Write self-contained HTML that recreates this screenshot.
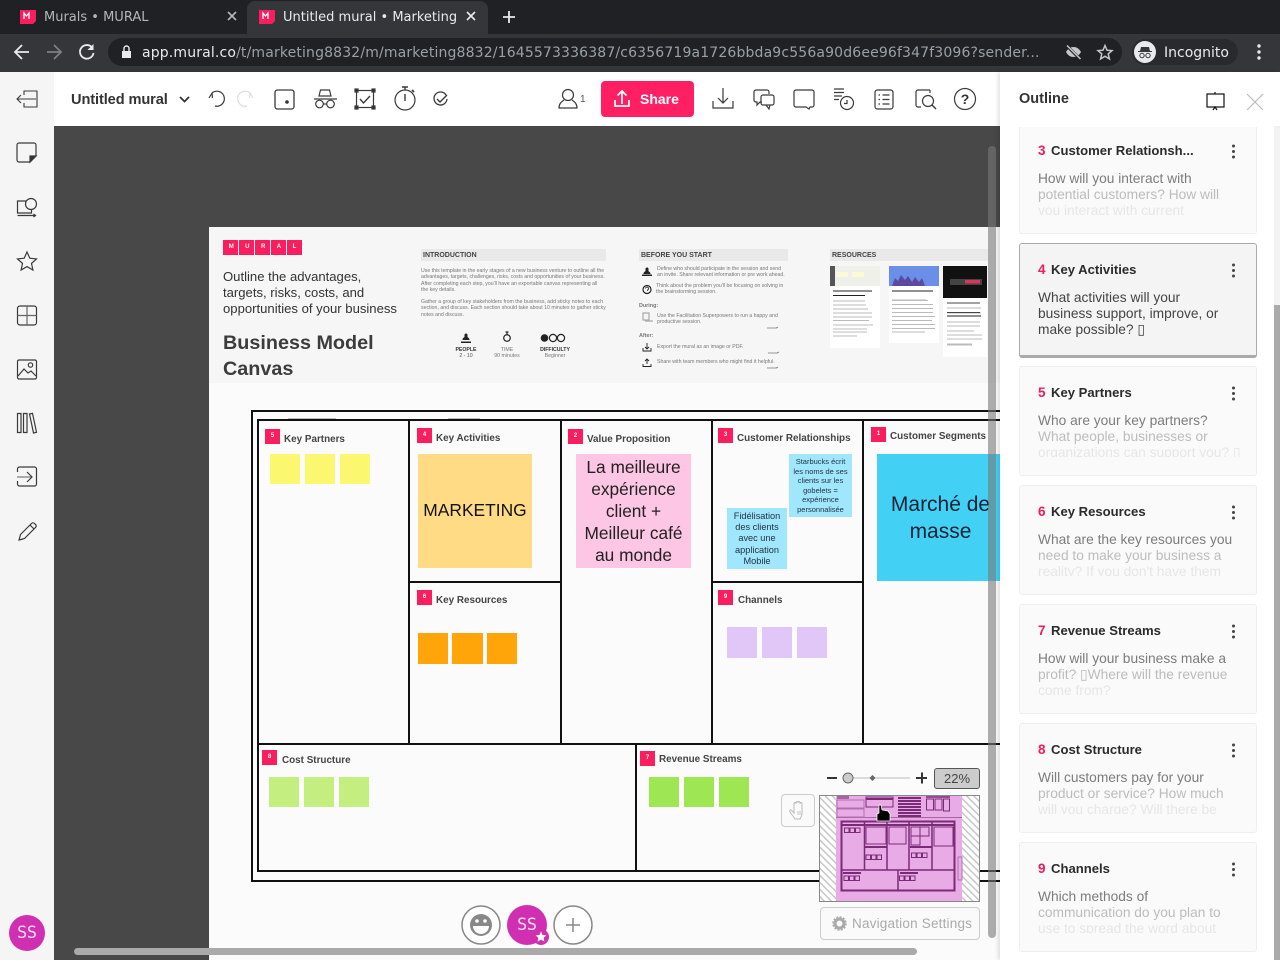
<!DOCTYPE html>
<html><head><meta charset="utf-8"><title>Untitled mural • Marketing</title>
<style>
html,body{margin:0;padding:0;width:1280px;height:960px;overflow:hidden;background:#484848;font-family:"Liberation Sans",sans-serif}
div{box-sizing:border-box}
.a{position:absolute}
.t{position:absolute;white-space:nowrap;line-height:20px;height:20px}
.c{font-family:"DejaVu Sans",sans-serif}
.s{position:absolute}
.tile{position:absolute;width:15px;height:15px;background:#fb1e5f;color:#fff;font-size:6px;font-weight:bold;text-align:center;line-height:14px}
.lb{position:absolute;white-space:nowrap;font-size:9.9px;font-weight:bold;color:#444;line-height:12px;margin-top:2px}
.b{position:absolute;background:#111}
.card{position:absolute;left:1019px;width:238px;background:#fafafa;border:1px solid #eee;border-radius:3px}
.n{position:absolute;left:1038px;font-size:13.5px;font-weight:bold;color:#f4185c;line-height:20px;white-space:nowrap}
.h{position:absolute;font-size:13.1px;font-weight:bold;color:#2b2b2b;line-height:20px;white-space:nowrap}
.l{position:absolute;left:1038px;font-size:13.75px;line-height:16px;white-space:nowrap;color:#7c7c7c}
.l2{color:#bcbcbc}.l3{color:#e6e6e6}
.m{position:absolute;font-size:5.2px;line-height:6.3px;color:#777;white-space:nowrap}
.hd{position:absolute;height:12px;background:#e9e9e9;font-size:7px;font-weight:bold;color:#444;line-height:13px;padding-left:2px}
</style></head><body>

<!-- browser chrome -->
<div class="a" style="left:0;top:0;width:1280px;height:34px;background:#202124"></div>
<div class="a" style="left:0;top:34px;width:1280px;height:38px;background:#35363a"></div>
<div class="a" style="left:247px;top:1px;width:241px;height:33px;background:#35363a;border-radius:8px 8px 0 0"></div>
<div class="a" style="left:108px;top:38px;width:1014px;height:28px;background:#202124;border-radius:14px"></div>
<div class="a" style="left:1132px;top:39px;width:106px;height:26px;background:#292a2d;border-radius:13px"></div>
<div class="t c" style="left:44px;top:8px;font-size:13px;color:#b4b6b9">Murals • MURAL</div>
<div class="t c" style="left:283px;top:8px;font-size:13px;color:#e8eaed">Untitled mural • Marketing</div>
<div class="t c" style="left:142px;top:43px;font-size:14px;color:#e8eaed;letter-spacing:.15px">app.mural.co<span style="color:#9aa0a6">/t/marketing8832/m/marketing8832/1645573336387/c6356719a1726bbda9c556a90d6ee96f347f3096?sender...</span></div>
<div class="t c" style="left:1164px;top:43px;font-size:14px;color:#e8eaed">Incognito</div>

<!-- canvas -->
<div class="a" style="left:54px;top:126px;width:946px;height:834px;background:#484848;overflow:hidden">
  <div class="a" style="left:155px;top:101px;width:800px;height:740px;background:#fbfbfb"></div>
  <div class="a" style="left:155px;top:101px;width:800px;height:156px;background:#f6f6f6"></div>
</div>

<!-- mural header -->
<div class="a" style="left:223px;top:240px;width:79px;height:15px;background:#fb1e5f"></div>
<div class="a" style="left:238px;top:240px;width:1px;height:15px;background:#f6f6f6"></div>
<div class="a" style="left:254px;top:240px;width:1px;height:15px;background:#f6f6f6"></div>
<div class="a" style="left:270px;top:240px;width:1px;height:15px;background:#f6f6f6"></div>
<div class="a" style="left:286px;top:240px;width:1px;height:15px;background:#f6f6f6"></div>
<div class="a" style="left:223px;top:240px;width:79px;height:15px;color:#fff;font-size:6px;font-weight:bold;line-height:15px;display:flex;justify-content:space-around;text-align:center"><span>M</span><span>U</span><span>R</span><span>A</span><span>L</span></div>
<div class="t" style="left:223px;top:267px;font-size:13.1px;color:#333">Outline the advantages,</div>
<div class="t" style="left:223px;top:283px;font-size:13.1px;color:#333">targets, risks, costs, and</div>
<div class="t" style="left:223px;top:299px;font-size:13.1px;color:#333">opportunities of your business</div>
<div class="t" style="left:223px;top:332px;font-size:19.8px;font-weight:bold;color:#3c3c3c;line-height:22px">Business Model</div>
<div class="t" style="left:223px;top:358px;font-size:19.8px;font-weight:bold;color:#3c3c3c;line-height:22px">Canvas</div>

<div class="hd" style="left:421px;top:249px;width:185px">INTRODUCTION</div>
<div class="m" style="left:421px;top:268px">Use this template in the early stages of a new business venture to outline all the<br>advantages, targets, challenges, risks, costs and opportunities of your business.<br>After completing each step, you'll have an exportable canvas representing all<br>the key details.</div>
<div class="m" style="left:421px;top:299px">Gather a group of key stakeholders from the business, add sticky notes to each<br>section, and discuss. Each section should take about 10 minutes to gather sticky<br>notes and discuss.</div>
<div class="m" style="left:445px;top:347px;width:42px;text-align:center;color:#555"><b style="color:#333">PEOPLE</b><br>2 - 10</div>
<div class="m" style="left:487px;top:347px;width:40px;text-align:center">TIME<br>90 minutes</div>
<div class="m" style="left:530px;top:347px;width:50px;text-align:center"><b style="color:#333">DIFFICULTY</b><br>Beginner</div>

<div class="hd" style="left:639px;top:249px;width:149px">BEFORE YOU START</div>
<div class="m" style="left:657px;top:266px">Define who should participate in the session and send<br>an invite. Share relevant information or pre work ahead.</div>
<div class="m" style="left:656px;top:283px">Think about the problem you'll be focusing on solving in<br>the brainstorming session.</div>
<div class="m" style="left:639px;top:303px;font-weight:bold;font-size:5.4px">During:</div>
<div class="m" style="left:657px;top:313px">Use the Facilitation Superpowers to run a happy and<br>productive session.</div>
<div class="m" style="left:639px;top:333px;font-weight:bold;font-size:5.4px">After:</div>
<div class="m" style="left:657px;top:344px">Export the mural as an image or PDF.</div>
<div class="m" style="left:657px;top:359px">Share with team members who might find it helpful.</div>

<div class="hd" style="left:830px;top:249px;width:158px">RESOURCES</div>

<!-- stickies -->
<div class="s" style="left:270px;top:454px;width:30px;height:30px;background:#fbf870"></div>
<div class="s" style="left:305px;top:454px;width:30px;height:30px;background:#fbf870"></div>
<div class="s" style="left:340px;top:454px;width:30px;height:30px;background:#fbf870"></div>
<div class="s" style="left:418px;top:454px;width:114px;height:114px;background:#ffdb85;font-size:17.4px;color:#111;text-align:center;line-height:112px">MARKETING</div>
<div class="s" style="left:576px;top:454px;width:115px;height:114px;background:#fcc6e4;font-size:17.3px;color:#222;text-align:center;line-height:22px;padding-top:2px">La meilleure<br>expérience<br>client +<br>Meilleur café<br>au monde</div>
<div class="s" style="left:789px;top:454px;width:63px;height:63px;background:#a0e6fd;font-size:7.5px;color:#234;text-align:center;line-height:9.5px;padding-top:3px">Starbucks écrit<br>les noms de ses<br>clients sur les<br>gobelets =<br>expérience<br>personnalisée</div>
<div class="s" style="left:727px;top:508px;width:60px;height:61px;background:#a0e6fd;font-size:9.2px;color:#234;text-align:center;line-height:11.2px;padding-top:3px">Fidélisation<br>des clients<br>avec une<br>application<br>Mobile</div>
<div class="s" style="left:877px;top:454px;width:127px;height:127px;background:#42d1f5;font-size:21px;color:#123;line-height:27px;padding-top:37px;text-align:center">Marché de<br>masse</div>
<div class="s" style="left:418px;top:633px;width:30px;height:31px;background:#ffa50a"></div>
<div class="s" style="left:452px;top:633px;width:31px;height:31px;background:#ffa50a"></div>
<div class="s" style="left:487px;top:633px;width:30px;height:31px;background:#ffa50a"></div>
<div class="s" style="left:727px;top:627px;width:30px;height:31px;background:#e1c6f8"></div>
<div class="s" style="left:762px;top:627px;width:30px;height:31px;background:#e1c6f8"></div>
<div class="s" style="left:797px;top:627px;width:30px;height:31px;background:#e1c6f8"></div>
<div class="s" style="left:269px;top:777px;width:30px;height:30px;background:#c4ee80"></div>
<div class="s" style="left:304px;top:777px;width:30px;height:30px;background:#c4ee80"></div>
<div class="s" style="left:339px;top:777px;width:30px;height:30px;background:#c4ee80"></div>
<div class="s" style="left:649px;top:777px;width:30px;height:30px;background:#9fe653"></div>
<div class="s" style="left:684px;top:777px;width:30px;height:30px;background:#9fe653"></div>
<div class="s" style="left:719px;top:777px;width:30px;height:30px;background:#9fe653"></div>

<!-- board lines -->
<div class="b" style="left:251px;top:410px;width:749px;height:2px"></div>
<div class="b" style="left:251px;top:410px;width:2px;height:472px"></div>
<div class="b" style="left:251px;top:880px;width:749px;height:2px"></div>
<div class="b" style="left:257px;top:419px;width:743px;height:2px"></div>
<div class="b" style="left:257px;top:419px;width:2px;height:453px"></div>
<div class="b" style="left:257px;top:870px;width:743px;height:2px"></div>
<div class="b" style="left:257px;top:743px;width:743px;height:2px"></div>
<div class="b" style="left:408px;top:419px;width:2px;height:325px"></div>
<div class="b" style="left:560px;top:419px;width:2px;height:325px"></div>
<div class="b" style="left:711px;top:419px;width:2px;height:325px"></div>
<div class="b" style="left:862px;top:419px;width:2px;height:325px"></div>
<div class="b" style="left:635px;top:743px;width:2px;height:128px"></div>
<div class="b" style="left:408px;top:581px;width:153px;height:2px"></div>
<div class="b" style="left:711px;top:581px;width:153px;height:2px"></div>
<div class="a" style="left:288px;top:418px;width:48px;height:1px;background:#bbb"></div>
<div class="a" style="left:448px;top:418px;width:32px;height:1px;background:#bbb"></div>

<!-- labels -->
<div class="tile" style="left:265px;top:429px">5</div><div class="lb" style="left:284px;top:432px">Key Partners</div>
<div class="tile" style="left:417px;top:428px">4</div><div class="lb" style="left:436px;top:431px">Key Activities</div>
<div class="tile" style="left:568px;top:429px">2</div><div class="lb" style="left:587px;top:432px">Value Proposition</div>
<div class="tile" style="left:718px;top:428px">3</div><div class="lb" style="left:737px;top:431px">Customer Relationships</div>
<div class="tile" style="left:871px;top:427px">1</div><div class="lb" style="left:890px;top:429px">Customer Segments</div>
<div class="tile" style="left:417px;top:590px">6</div><div class="lb" style="left:436px;top:593px">Key Resources</div>
<div class="tile" style="left:718px;top:590px">9</div><div class="lb" style="left:738px;top:593px">Channels</div>
<div class="tile" style="left:262px;top:750px">8</div><div class="lb" style="left:282px;top:753px">Cost Structure</div>
<div class="tile" style="left:640px;top:751px">7</div><div class="lb" style="left:659px;top:752px">Revenue Streams</div>

<!-- left sidebar + toolbar -->
<div class="a" style="left:0;top:72px;width:54px;height:888px;background:#f5f5f5"></div>
<div class="a" style="left:54px;top:72px;width:946px;height:54px;background:#fff"></div>
<div class="t" style="left:71px;top:90px;font-size:14.6px;font-weight:bold;color:#333;letter-spacing:-.1px">Untitled mural</div>
<div class="a" style="left:601px;top:81px;width:93px;height:36px;background:#ff1f62;border-radius:4px"></div>
<div class="t" style="left:640px;top:89px;font-size:14px;font-weight:bold;color:#fff">Share</div>
<div class="t" style="left:580px;top:90px;font-size:10px;color:#555">1</div>

<!-- scrollbars -->
<div class="a" style="left:988px;top:146px;width:8px;height:792px;background:rgba(120,120,120,.6);border-radius:4px"></div>
<div class="a" style="left:74px;top:948px;width:843px;height:7px;background:#aaa;border-radius:4px"></div>

<!-- zoom controls -->
<div class="a" style="left:934px;top:768px;width:46px;height:21px;background:#ccc;border:1px solid #555;border-radius:3px;text-align:center;font-size:13px;line-height:20px;color:#444">22%</div>
<div class="a" style="left:781px;top:794px;width:34px;height:33px;background:#fafafa;border:1px solid #ccc;border-radius:4px"></div>
<div class="a" style="left:820px;top:907px;width:160px;height:33px;background:#fafafa;border:1px solid #ccc;border-radius:4px"></div>
<div class="t" style="left:852px;top:914px;font-size:13.5px;color:#aaa;letter-spacing:.2px">Navigation Settings</div>

<!-- right panel -->
<div class="a" style="left:1000px;top:72px;width:280px;height:888px;background:#fff;box-shadow:-2px 0 4px rgba(0,0,0,.12)"></div>
<div class="t" style="left:1019px;top:89px;font-size:14.5px;font-weight:bold;color:#333">Outline</div>
<div class="a" style="left:1274px;top:126px;width:6px;height:834px;background:#f2f2f2"></div>
<div class="a" style="left:1274px;top:305px;width:6px;height:655px;background:#aaa"></div>

<div class="card" style="top:127px;height:107px;border-top:none;border-radius:0 0 3px 3px"></div>
<div class="card" style="top:243px;height:115px;background:#f4f4f4;border:1px solid #aaa;border-bottom:3px solid #aaa"></div>
<div class="card" style="top:366px;height:110px"></div>
<div class="card" style="top:485px;height:110px"></div>
<div class="card" style="top:604px;height:110px"></div>
<div class="card" style="top:723px;height:110px"></div>
<div class="card" style="top:842px;height:110px"></div>

<div class="n" style="top:141px">3</div><div class="h" style="left:1051px;top:141px">Customer Relationsh...</div>
<div class="l" style="top:171px">How will you interact with</div>
<div class="l l2" style="top:187px">potential customers? How will</div>
<div class="l l3" style="top:203px;height:12px;overflow:hidden">you interact with current</div>

<div class="n" style="top:260px">4</div><div class="h" style="left:1051px;top:260px">Key Activities</div>
<div class="l" style="top:290px;color:#444">What activities will your</div>
<div class="l" style="top:306px;color:#444">business support, improve, or</div>
<div class="l" style="top:322px;color:#444">make possible? ▯</div>

<div class="n" style="top:383px">5</div><div class="h" style="left:1051px;top:383px">Key Partners</div>
<div class="l" style="top:413px">Who are your key partners?</div>
<div class="l l2" style="top:429px">What people, businesses or</div>
<div class="l l3" style="top:445px;height:12px;overflow:hidden">organizations can support you? ▯</div>

<div class="n" style="top:502px">6</div><div class="h" style="left:1051px;top:502px">Key Resources</div>
<div class="l" style="top:532px">What are the key resources you</div>
<div class="l l2" style="top:548px">need to make your business a</div>
<div class="l l3" style="top:564px;height:12px;overflow:hidden">reality? If you don't have them</div>

<div class="n" style="top:621px">7</div><div class="h" style="left:1051px;top:621px">Revenue Streams</div>
<div class="l" style="top:651px">How will your business make a</div>
<div class="l l2" style="top:667px">profit? ▯Where will the revenue</div>
<div class="l l3" style="top:683px;height:12px;overflow:hidden">come from?</div>

<div class="n" style="top:740px">8</div><div class="h" style="left:1051px;top:740px">Cost Structure</div>
<div class="l" style="top:770px">Will customers pay for your</div>
<div class="l l2" style="top:786px">product or service? How much</div>
<div class="l l3" style="top:802px;height:12px;overflow:hidden">will you charge? Will there be</div>

<div class="n" style="top:859px">9</div><div class="h" style="left:1051px;top:859px">Channels</div>
<div class="l" style="top:889px">Which methods of</div>
<div class="l l2" style="top:905px">communication do you plan to</div>
<div class="l l3" style="top:921px;height:12px;overflow:hidden">use to spread the word about</div>

<!-- icon overlay -->
<svg class="a" style="left:0;top:0" width="1280" height="960" viewBox="0 0 1280 960" fill="none" xmlns="http://www.w3.org/2000/svg">
<defs>
<pattern id="ht" width="5" height="5" patternUnits="userSpaceOnUse" patternTransform="rotate(-45)"><rect width="5" height="5" fill="#fff"/><rect width="1.400" height="5" fill="#c4c4c4"/></pattern>
</defs>

<!-- favicons -->
<path d="M20 10h16v11l-3 3H20z" fill="#fb1e5f"/><path d="M24 19v-6l2.500 3 2.500-3v6" stroke="#fff" stroke-width="1.300"/>
<path d="M259 10h16v11l-3 3h-13z" fill="#fb1e5f"/><path d="M263 19v-6l2.500 3 2.500-3v6" stroke="#fff" stroke-width="1.300"/>
<!-- tab close / new -->
<path d="M228 12l8 8M236 12l-8 8" stroke="#b4b6b9" stroke-width="1.600"/>
<path d="M467 12l8 8M475 12l-8 8" stroke="#e8eaed" stroke-width="1.600"/>
<path d="M509 11v12M503 17h12" stroke="#e8eaed" stroke-width="1.800"/>
<!-- nav -->
<path d="M29 52H16M22 45l-7 7 7 7" stroke="#e8eaed" stroke-width="1.800"/>
<path d="M47 52h13M54 45l7 7-7 7" stroke="#7d7f83" stroke-width="1.800"/>
<path d="M92 47.500A6.800 6.800 0 1 0 93.500 53" stroke="#e8eaed" stroke-width="1.800"/><path d="M93.500 44v6h-6z" fill="#e8eaed"/>
<path d="M122 51h9v7h-9z" fill="#e8eaed"/><path d="M124 51v-2.500a2.500 2.500 0 0 1 5 0V51" stroke="#e8eaed" stroke-width="1.400"/>
<!-- eye off -->
<path d="M1066 52c2-3.500 4.500-5 7.500-5s5.500 1.500 7.500 5c-2 3.500-4.500 5-7.500 5s-5.500-1.500-7.500-5z" fill="#c4c6c9"/><path d="M1067 46l13 13" stroke="#202124" stroke-width="3"/><path d="M1067 45.500l13.500 13.500" stroke="#c4c6c9" stroke-width="1.500"/>
<path d="M1105 45.500l2 4.700 5 .4-3.800 3.300 1.200 5-4.400-2.700-4.400 2.700 1.200-5-3.800-3.300 5-.4z" stroke="#c4c6c9" stroke-width="1.500"/>
<circle cx="1145" cy="52" r="11" fill="#e8eaed"/>
<path d="M1141 47h8l1 4h2v1h-14v-1h2z" fill="#35363a"/><circle cx="1142" cy="55.500" r="2.200" stroke="#35363a"/><circle cx="1148" cy="55.500" r="2.200" stroke="#35363a"/>
<circle cx="1259" cy="46" r="1.700" fill="#e8eaed"/><circle cx="1259" cy="52" r="1.700" fill="#e8eaed"/><circle cx="1259" cy="58" r="1.700" fill="#e8eaed"/>

<g stroke="#3a3a3a" stroke-width="1.200">
<!-- exit -->
<path d="M24 95v-4h13v16H24v-4M36 99H17M21 95l-4 4 4 4" stroke-width="1.100"/>
<!-- chevron -->
<path d="M180 97l4.500 4.500L189 97" stroke="#333" stroke-width="1.800"/>
<!-- undo -->
<path d="M212 93a7.500 7.500 0 1 1 3 13M212 93l-3 5M212 93l.5 5" stroke-width="1.200"/>
<path d="M250 93a7.500 7.500 0 1 0-3 13M250 93l3 5M250 93l-.5 5" stroke="#ddd" stroke-width="1.200"/>
<!-- sticky dot -->
<rect x="275" y="90" width="19" height="19" rx="2.500" stroke-width="1.300"/><circle cx="287" cy="102" r="1.800" fill="#333" stroke="none"/>
<!-- incognito -->
<path d="M314 99h23M319 96l1.500-6h9l1.500 6zM318.500 96h13"/><circle cx="319.500" cy="104" r="3.800"/><circle cx="330.500" cy="104" r="3.800"/><path d="M323.500 104h3"/>
<!-- select -->
<rect x="356.500" y="90.500" width="17" height="17"/><path d="M360 99l3.500 4 6.500-7" stroke-width="1.400"/>
<rect x="355" y="89" width="3" height="3" fill="#333"/><rect x="372" y="89" width="3" height="3" fill="#333"/><rect x="355" y="106" width="3" height="3" fill="#333"/><rect x="372" y="106" width="3" height="3" fill="#333"/>
<!-- timer -->
<circle cx="405" cy="100" r="10"/><path d="M405 94v7M405 90v-3M402 87h6" stroke-width="1.400"/><path d="M412 90l2 2" stroke-width="1.800"/>
<!-- check circle -->
<path d="M446 95a6.500 6.500 0 1 0 1 4" stroke-width="1.300"/><path d="M437 99l3 3 7-7" stroke-width="1.400"/>
<!-- people -->
<circle cx="568" cy="95" r="5.500"/><path d="M564 100c-3 2-5 4-5 8h18c0-4-2-6-5-8"/>
<!-- share icon -->
<path d="M622 91v13M617.500 95.500l4.500-4.500 4.500 4.500M615 100v6h14v-6" stroke="#fff" stroke-width="1.700"/>
<!-- download -->
<path d="M723 88v15M718 98l5 5 5-5M713 101v7h20v-7"/>
<!-- comments -->
<path d="M756 90h11a2 2 0 0 1 2 2v2M762 102h-2l-3 3v-3h-1a2 2 0 0 1-2-2v-8a2 2 0 0 1 2-2"/><rect x="761" y="95" width="13" height="10" rx="2"/><path d="M766 105l3 4 1-4"/>
<!-- comment -->
<path d="M796 90h16a2 2 0 0 1 2 2v13a2 2 0 0 1-2 2h-2l-1 2-3-2h-10a2 2 0 0 1-2-2V92a2 2 0 0 1 2-2z"/>
<!-- history -->
<path d="M834 89h10M834 92.500h10M834 96h8M834 99.500h5"/><circle cx="847" cy="103" r="6.500"/><path d="M847 100v3.500h-3"/>
<!-- list -->
<rect x="875" y="90" width="18" height="19" rx="2.500"/><path d="M878.500 95h1.500M878.500 99.500h1.500M878.500 104h1.500M882.500 95h7M882.500 99.500h7M882.500 104h7"/>
<!-- search doc -->
<path d="M930 90h-12a2 2 0 0 0-2 2v13a2 2 0 0 0 2 2h3"/><path d="M930 90v3"/><circle cx="928" cy="101" r="5.500"/><path d="M932 105l4 4" stroke-width="1.500"/>
<!-- help -->
<circle cx="965" cy="99" r="10.500"/>
<!-- presentation -->
<rect x="1207" y="94" width="17" height="13" stroke="#111"/><path d="M1215 92v2M1213 110l2-3 2 3" stroke="#111"/>
<!-- close -->
<path d="M1247 94l16 16M1263 94l-16 16" stroke="#bbb"/>

<!-- left tools -->
<path d="M19 143h15a2 2 0 0 1 2 2v11l-6 6H19a2 2 0 0 1-2-2v-15a2 2 0 0 1 2-2z"/><path d="M36 156h-6v6z" fill="#333"/>
<path d="M17.500 201h14v12h-14z"/><circle cx="31" cy="204" r="5.500" fill="#f5f5f5"/><path d="M17.500 215.500h18M33.500 214l2 1.500-2 1.500"/>
<path d="M27 252l2.800 6.200 6.700.7-5 4.500 1.400 6.600-5.900-3.400-5.900 3.400 1.400-6.600-5-4.500 6.700-.7z"/>
<rect x="17.500" y="306" width="19" height="19" rx="2.500"/><path d="M27 306v19M17.500 315.500h19" stroke="#666"/>
<rect x="17.500" y="360" width="19" height="19" rx="1.500"/><path d="M18 376l6-7 4 4 3-2 5 5"/><circle cx="30.500" cy="365" r="2.200"/>
<path d="M17.500 413.500h3.500v19h-3.500zM23.500 413.500h3.500v19h-3.500zM29.500 414l3-.7 4 19-3 .7z"/>
<path d="M17.500 472v-3a2 2 0 0 1 2-2h15a2 2 0 0 1 2 2v15a2 2 0 0 1-2 2h-15a2 2 0 0 1-2-2v-3"/><path d="M17 477h15" stroke="#777"/><path d="M27 472l5 5-5 5"/>
<path d="M19 540l1.500-5.500 11-11a2 2 0 0 1 3 0l1 1a2 2 0 0 1 0 3l-11 11zM30 525l4 4M19 540l4-1"/>

<!-- intro icons -->
<path d="M461 341.500h10v1.500h-10zM462.500 340c0-2 1.500-2.500 2-3v-2a1.500 1.500 0 0 1 3 0v2c.5.5 2 1 2 3z" fill="#222" stroke="none"/>
<circle cx="507" cy="338" r="3.300" stroke="#222"/><path d="M507 335.500V332M505.500 332h3" stroke="#222"/>
<circle cx="544.500" cy="338" r="3.800" fill="#222" stroke="none"/><circle cx="553" cy="338" r="3.600" stroke="#222"/><circle cx="561" cy="338" r="3.600" stroke="#222"/>
<path d="M642 276h10v-1.500h-10zM643.500 274c0-2 1-2 2-3v-2a1.500 1.500 0 0 1 3 0v2c.5 1 2 1 2 3z" fill="#222" stroke="none"/>
<circle cx="647" cy="289.500" r="4" stroke="#222"/><path d="M645.500 288.500a1.500 1.500 0 1 1 2 1.500v1" stroke="#222" stroke-width=".8"/>
<path d="M643 313h6v7h-6zM645 321h8" stroke="#aaa"/>
<path d="M647 343v6M645 347l2 2 2-2M643 348v3h8v-3" stroke="#222" stroke-width=".9"/>
<path d="M647 359v5M645 361l2-2 2 2M643 364v2.500h8V364" stroke="#222" stroke-width=".9"/>
</g>
<g stroke="#777" stroke-width=".7"><path d="M767 328h10M776 328l2-1M768 353h10M777 353l2-1M767 368h10M776 368l2-1"/></g>

<!-- resources -->
<rect x="830" y="266" width="50" height="82" fill="#fff"/><rect x="830" y="266" width="50" height="20" fill="#f0f0ea"/><rect x="830" y="266" width="5" height="20" fill="#555"/><rect x="836" y="272" width="12" height="5" fill="#fbf9d8"/><rect x="852" y="272" width="12" height="5" fill="#fbf9d8"/>
<rect x="889" y="266" width="50" height="77" fill="#fff"/><rect x="889" y="266" width="50" height="20" fill="#6b8fe8"/><path d="M892 286l3-8 3 3 3-6 4 5 3-4 4 6 3-5 4 5 3-4 3 8z" fill="#5b4a9e"/>
<rect x="943" y="266" width="44" height="91" fill="#fff"/><rect x="943" y="266" width="44" height="32" fill="#111"/><rect x="950" y="279" width="32" height="6" fill="#444"/><rect x="965" y="280" width="15" height="3.500" fill="#d4385c"/>
<g stroke-width="1.100">
<path d="M833 291h28M833 295.500h32M833 301h32M833 305h33M833 309h35M833 313h39M833 317h39M833 320.500h36M833 325h40M833 329h34M833 332h34M833 336h24" stroke="#bbb"/><path d="M833 291h39M833 295.500h32" stroke="#222"/>
<path d="M892 291h41M892 300h34M892 300.500h36M892 304.500h41M892 308.500h41M892 312.500h41M892 316.500h43M892 320.500h40M892 324.500h43M892 328.500h43M892 332h33" stroke="#bbb"/><path d="M892 291h41" stroke="#222"/>
<path d="M947 303h33M947 308h34M947 313h34M947 322h33M947 326h33M947 331h27M947 335h35M947 339h35M947 344h25M947 345h25" stroke="#bbb"/><path d="M947 303h33M947 312.500h33" stroke="#444"/><path d="M947 316h34" stroke="#222"/>
</g>

<!-- zoom slider -->
<path d="M827 778h10M916 778h11M922 772.500v11" stroke="#333" stroke-width="2"/>
<path d="M853 778h57" stroke="#bbb"/>
<circle cx="848" cy="778" r="5" fill="#ccc" stroke="#666"/>
<path d="M872.500 775l3 3-3 3-3-3z" fill="#666"/>
<!-- hand -->
<path d="M795 819c-1-2-4-5-5-7-1-2 1-3 2-1l2 2v-9c0-2 2-2 2 0v-1c0-2 2-2 2 0v0c0-2 2-2 2 0v1c0-2 2-2 2 0v9c0 3-1 4-2 6z" stroke="#bbb" stroke-width="1"/><path d="M798 811v4M800 811v4M802 811v4" stroke="#bbb" stroke-width=".8"/>

<!-- minimap -->
<rect x="819.500" y="795.500" width="160" height="106" fill="url(#ht)" stroke="#888"/>
<rect x="836" y="796" width="126" height="105" fill="#e9abe6"/>
<g stroke="#7a2b78" stroke-width="1">
<path d="M836 817.500h126" stroke="#a565a2"/>
<rect x="837" y="800" width="27" height="8" stroke="#b26fb0"/><rect x="837" y="809" width="27" height="8" stroke="#b26fb0"/><rect x="837" y="796" width="12" height="3" fill="#a565a2" stroke="none"/>
<rect x="866" y="797" width="27" height="10"/><path d="M866 799h27" stroke-width="2"/>
<path d="M898 798h23M898 801h23M898 804h23M898 807h23M898 810h23M898 813h23M898 816h23" stroke-width="2"/>
<path d="M926 797h24" stroke-width="1.500"/><rect x="926.500" y="799" width="7" height="11"/><rect x="935" y="799" width="7" height="11"/><rect x="943.500" y="799" width="6" height="12"/>
<rect x="841.500" y="821.500" width="113" height="69" stroke-width="2"/>
<path d="M842 825h112" stroke-width="2"/>
<path d="M864.500 822v48M887 822v48M909 822v48M932 822v48M842 870h112M898 870v20" stroke-width="1.500"/>
<path d="M865 847h22M910 847h22" stroke-width="2"/>
<rect x="866" y="827" width="20" height="17" /><rect x="889" y="827" width="17" height="17"/><rect x="911" y="827" width="9" height="9"/><rect x="920" y="827" width="9" height="9"/><rect x="911" y="836" width="9" height="9"/><rect x="934" y="827" width="19" height="19"/>
<rect x="844.500" y="828" width="4.500" height="4.500"/><rect x="850" y="828" width="4.500" height="4.500"/><rect x="855.500" y="828" width="4.500" height="4.500"/>
<rect x="866" y="855" width="4.500" height="4.500"/><rect x="871.500" y="855" width="4.500" height="4.500"/><rect x="877" y="855" width="4.500" height="4.500"/>
<rect x="911.500" y="853" width="4.500" height="4.500"/><rect x="917" y="853" width="4.500" height="4.500"/><rect x="922.500" y="853" width="4.500" height="4.500"/>
<rect x="844" y="876" width="4.500" height="4.500"/><rect x="849.500" y="876" width="4.500" height="4.500"/><rect x="855" y="876" width="4.500" height="4.500"/>
<rect x="899.500" y="876" width="4.500" height="4.500"/><rect x="905" y="876" width="4.500" height="4.500"/><rect x="910.500" y="876" width="4.500" height="4.500"/>
<path d="M843 873h18M900 873h18" stroke-width="2"/>
<rect x="958" y="857" width="4" height="23" stroke="#b26fb0"/>
</g>
<!-- cursor -->
<path d="M879 805h2l1 5 6 1 2 3v7h-13v-7l2-1z" fill="#000" stroke="#fff" stroke-width=".7"/>
<!-- gear -->
<circle cx="839.500" cy="923.500" r="4.500" stroke="#aaa" stroke-width="3"/><circle cx="839.500" cy="923.500" r="6.500" stroke="#aaa" stroke-width="1.600" stroke-dasharray="2 1.400"/>

<!-- bottom avatars -->
<circle cx="27" cy="933" r="18" fill="#cf2fb0"/>
<circle cx="481" cy="925" r="19" fill="#fff" stroke="#888" stroke-width="1.500"/>
<circle cx="481" cy="925" r="11" fill="#888"/><circle cx="477" cy="921" r="1.800" fill="#fff"/><circle cx="485" cy="921" r="1.800" fill="#fff"/><path d="M473 926h16a8 8 0 0 1-16 0z" fill="#fff"/>
<circle cx="527" cy="925" r="20" fill="#cf2fb0"/>
<circle cx="541" cy="937" r="8" fill="#cf2fb0"/><path d="M541 931.500l1.600 3.500 3.800.4-2.800 2.500.8 3.700-3.400-2-3.400 2 .8-3.700-2.800-2.500 3.800-.4z" fill="#fff"/>
<circle cx="573" cy="925" r="19" fill="#fff" stroke="#888" stroke-width="1.500"/>
<path d="M573 918v14M566 925h14" stroke="#888" stroke-width="1.500"/>

<!-- card kebabs -->
<g fill="#444">
<circle cx="1233.500" cy="146" r="1.500"/><circle cx="1233.500" cy="151.500" r="1.500"/><circle cx="1233.500" cy="157" r="1.500"/>
<circle cx="1233.500" cy="265" r="1.500"/><circle cx="1233.500" cy="270.500" r="1.500"/><circle cx="1233.500" cy="276" r="1.500"/>
<circle cx="1233.500" cy="388" r="1.500"/><circle cx="1233.500" cy="393.500" r="1.500"/><circle cx="1233.500" cy="399" r="1.500"/>
<circle cx="1233.500" cy="507" r="1.500"/><circle cx="1233.500" cy="512.500" r="1.500"/><circle cx="1233.500" cy="518" r="1.500"/>
<circle cx="1233.500" cy="626" r="1.500"/><circle cx="1233.500" cy="631.500" r="1.500"/><circle cx="1233.500" cy="637" r="1.500"/>
<circle cx="1233.500" cy="745" r="1.500"/><circle cx="1233.500" cy="750.500" r="1.500"/><circle cx="1233.500" cy="756" r="1.500"/>
<circle cx="1233.500" cy="864" r="1.500"/><circle cx="1233.500" cy="869.500" r="1.500"/><circle cx="1233.500" cy="875" r="1.500"/>
</g>
</svg>
<div class="t" style="left:959px;top:89px;width:12px;text-align:center;font-size:14px;font-weight:bold;color:#333">?</div>
<div class="t" style="left:9px;top:923px;width:36px;text-align:center;font-size:17px;color:#f7e0f2;font-family:'DejaVu Sans Condensed','DejaVu Sans',sans-serif">SS</div>
<div class="t" style="left:507px;top:915px;width:40px;text-align:center;font-size:17px;color:#f7e0f2;font-family:'DejaVu Sans Condensed','DejaVu Sans',sans-serif">SS</div>
</body></html>
